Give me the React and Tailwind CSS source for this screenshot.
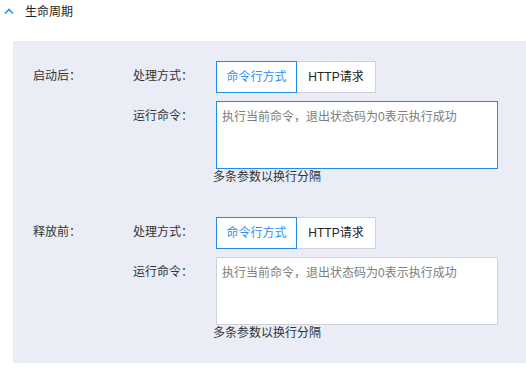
import { useState } from 'react';

const hooks = [
  { id: 'post', label: '启动后：', focused: true },
  { id: 'pre', label: '释放前：', focused: false },
];

const cjk = "font-['Noto_Sans_CJK_SC',sans-serif]";

function HookRow({ label, focused }) {
  const [mode, setMode] = useState('cmd');
  return (
    <div className="flex">
      <div className={`w-[100px] shrink-0 leading-[28px] ${cjk}`}>{label}</div>
      <div className="flex flex-col">
        {/* 处理方式 */}
        <div className="flex">
          <div className={`w-[83px] shrink-0 leading-[28px] ${cjk}`}>处理方式：</div>
          <div className="flex h-[32px]">
            <button
              onClick={() => setMode('cmd')}
              className={`w-[81px] border bg-white ${mode === 'cmd' ? 'border-[#1c8cf0] text-[#2e8ff0] relative z-10' : 'border-[#cfd2d8] text-[#222]'}`}
            >
              命令行方式
            </button>
            <button
              onClick={() => setMode('http')}
              className={`w-[80px] -ml-px border bg-white ${mode === 'http' ? 'border-[#1c8cf0] text-[#2e8ff0] relative z-10' : 'border-[#cfd2d8] text-[#222]'}`}
            >
              HTTP请求
            </button>
          </div>
        </div>

        {/* 运行命令 */}
        <div className="flex mt-[8px]">
          <div className={`w-[83px] shrink-0 leading-[28px] ${cjk}`}>运行命令：</div>
          <div className="flex flex-col">
            <textarea
              className={`w-[282px] h-[68px] resize-none bg-white border px-[5px] py-[7px] leading-[16px] outline-none placeholder:text-[#7d7d7d] ${focused ? 'border-[#1c8cf0]' : 'border-[#cfd2d8]'}`}
              placeholder="执行当前命令，退出状态码为0表示执行成功"
            />
            <div className="-ml-[3px] leading-[16px] text-[#333]">多条参数以换行分隔</div>
          </div>
        </div>
      </div>
    </div>
  );
}

export default function App() {
  return (
    <div className="w-[526px] h-[368px] bg-white text-[12px] text-[#333] font-['Liberation_Sans','Noto_Sans_CJK_SC',sans-serif] overflow-hidden">
      {/* Header */}
      <div className="flex items-center h-[24px] pl-[4px]">
        <svg width="10" height="7" viewBox="0 0 10 7" className="mt-[-1px]">
          <path d="M1 5.5 L5 1.5 L9 5.5" fill="none" stroke="#2e8ff0" strokeWidth="1.6" />
        </svg>
        <span className="ml-[11px] text-[#222]">生命周期</span>
      </div>

      {/* Panel */}
      <div className="mt-[17px] ml-[13px] bg-[#eaedf6] pl-[20px] pt-[20px] pb-[22px] flex flex-col gap-[32px]">
        {hooks.map((h) => (
          <HookRow key={h.id} label={h.label} focused={h.focused} />
        ))}
      </div>
    </div>
  );
}
